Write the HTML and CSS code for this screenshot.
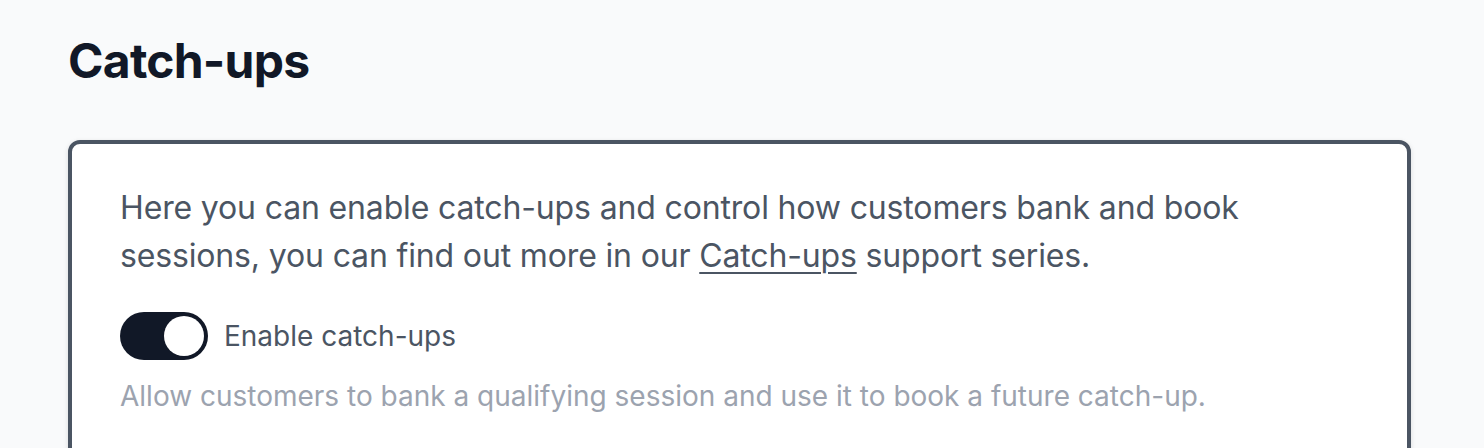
FILE: index.html
```html
<!DOCTYPE html>
<html lang="en">
<head>
    <meta charset="UTF-8">
    <meta name="viewport" content="width=device-width, initial-scale=1.0">
    <title>Catch-ups</title>
    <link rel="stylesheet" href="styles.css">
</head>
<body>
    <main class="page">
        <h1 class="page-title">Catch-ups</h1>
        <section class="card">
            <p class="intro">
                Here you can enable catch-ups and control how customers bank and book sessions, you can find out more in our <a href="#">Catch-ups</a> support series.
            </p>
            <label class="toggle-row">
                <span class="toggle on"><span class="knob"></span></span>
                <span class="toggle-label">Enable catch-ups</span>
            </label>
            <p class="hint">Allow customers to bank a qualifying session and use it to book a future catch-up.</p>
        </section>
    </main>
</body>
</html>
```

FILE: styles.css
```css
body {
    margin: 0;
    background: #f9fafb;
    font-family: 'Inter', 'Noto Sans', sans-serif;
    color: #4b5563;
}

.page {
    padding: 29px 73px 0 68px;
}

.page-title {
    margin: 0 0 47px;
    font-size: 48px;
    line-height: 64px;
    font-weight: 700;
    letter-spacing: -0.75px;
    color: #111827;
}

.card {
    background: #ffffff;
    border: 4px solid #4b5563;
    border-radius: 12px;
    padding: 40px 48px 48px;
    box-shadow: 0 2px 6px rgba(0, 0, 0, 0.08), 0 1px 4px rgba(0, 0, 0, 0.05);
}

.intro {
    margin: 0;
    font-size: 32px;
    line-height: 48px;
    letter-spacing: -0.15px;
}

.intro a {
    color: inherit;
    text-decoration: underline;
    text-underline-offset: 5px;
    text-decoration-thickness: 2px;
}

.toggle-row {
    display: flex;
    align-items: center;
    gap: 16px;
    margin-top: 32px;
}

.toggle {
    display: flex;
    align-items: center;
    justify-content: flex-end;
    width: 88px;
    height: 48px;
    padding: 4px;
    box-sizing: border-box;
    border-radius: 24px;
    background: #111827;
}

.knob {
    width: 40px;
    height: 40px;
    border-radius: 50%;
    background: #ffffff;
}

.toggle-label {
    font-size: 28px;
    line-height: 40px;
}

.hint {
    margin: 16px 0 0;
    font-size: 28px;
    line-height: 40px;
    color: #9ca3af;
}
```
